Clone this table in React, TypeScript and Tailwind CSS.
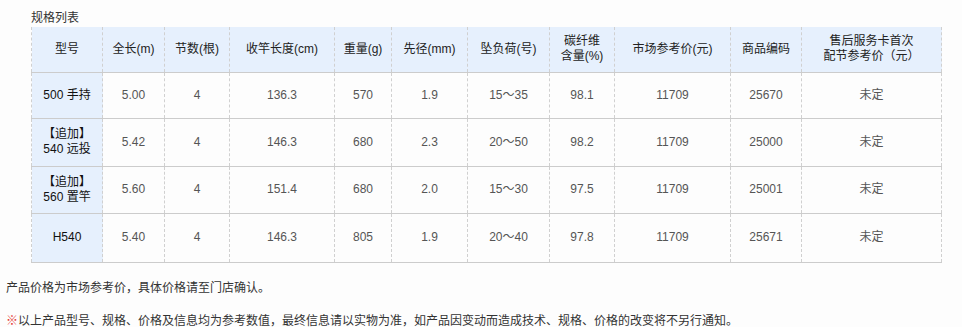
import React from "react";

const cols = [71, 62, 65, 105, 57, 76, 82, 65, 116, 71, 140];

const headers: React.ReactNode[] = [
  "型号",
  "全长(m)",
  "节数(根)",
  "收竿长度(cm)",
  "重量(g)",
  "先径(mm)",
  "坠负荷(号)",
  <>碳纤维<br />含量(%)</>,
  "市场参考价(元)",
  "商品编码",
  <>售后服务卡首次<br />配节参考价（元）</>,
];

const rows: { h: string; cells: React.ReactNode[] }[] = [
  { h: "h-[46px]", cells: ["500 手持", "5.00", "4", "136.3", "570", "1.9", "15～35", "98.1", "11709", "25670", "未定"] },
  { h: "h-[48px]", cells: [<>【追加】<br />540 远投</>, "5.42", "4", "146.3", "680", "2.3", "20～50", "98.2", "11709", "25000", "未定"] },
  { h: "h-[47px]", cells: [<>【追加】<br />560 置竿</>, "5.60", "4", "151.4", "680", "2.0", "15～30", "97.5", "11709", "25001", "未定"] },
  { h: "h-[49px]", cells: ["H540", "5.40", "4", "146.3", "805", "1.9", "20～40", "97.8", "11709", "25671", "未定"] },
];

export default function App() {
  return (
    <div
      className="w-[962px] h-[327px] bg-[#fdfdfd] text-[12px] text-[#333] overflow-hidden"
      style={{ fontFamily: '"Liberation Sans", "Noto Sans CJK SC", sans-serif' }}
    >
      <div className="pl-[31px] pt-[10px] leading-[17px]">规格列表</div>
      <div className="pl-[31px]">
        <table className="border-collapse table-fixed w-[910px] leading-[15px]">
          <colgroup>
            {cols.map((w, i) => (
              <col key={i} style={{ width: w }} />
            ))}
          </colgroup>
          <thead>
            <tr className="h-[45px] bg-[#e6f0fd]">
              {headers.map((h, i) => (
                <th
                  key={i}
                  className="font-normal text-center align-middle text-[#222] border-x border-dashed border-x-[#d0d0d0] border-b border-b-[#cccccc] border-b-solid p-0"
                  style={{ borderBottomStyle: "solid" }}
                >
                  {h}
                </th>
              ))}
            </tr>
          </thead>
          <tbody>
            {rows.map((r, ri) => (
              <tr key={ri} className={r.h}>
                {r.cells.map((c, ci) => (
                  <td
                    key={ci}
                    className={
                      "text-center align-middle p-0 border-x border-dashed border-x-[#d0d0d0] border-b border-b-[#cccccc] " +
                      (ci === 0 ? "bg-[#e6f0fd] text-[#111]" : "text-[#555]")
                    }
                    style={{ borderBottomStyle: "solid" }}
                  >
                    {c}
                  </td>
                ))}
              </tr>
            ))}
          </tbody>
        </table>
      </div>
      <div className="pl-[6px] pt-[18px] leading-[15px]">产品价格为市场参考价，具体价格请至门店确认。</div>
      <div className="pl-[6px] pt-[18px] leading-[15px] whitespace-nowrap">
        <span className="text-[#e53935]">※</span>以上产品型号、规格、价格及信息均为参考数值，最终信息请以实物为准，如产品因变动而造成技术、规格、价格的改变将不另行通知。
      </div>
    </div>
  );
}
